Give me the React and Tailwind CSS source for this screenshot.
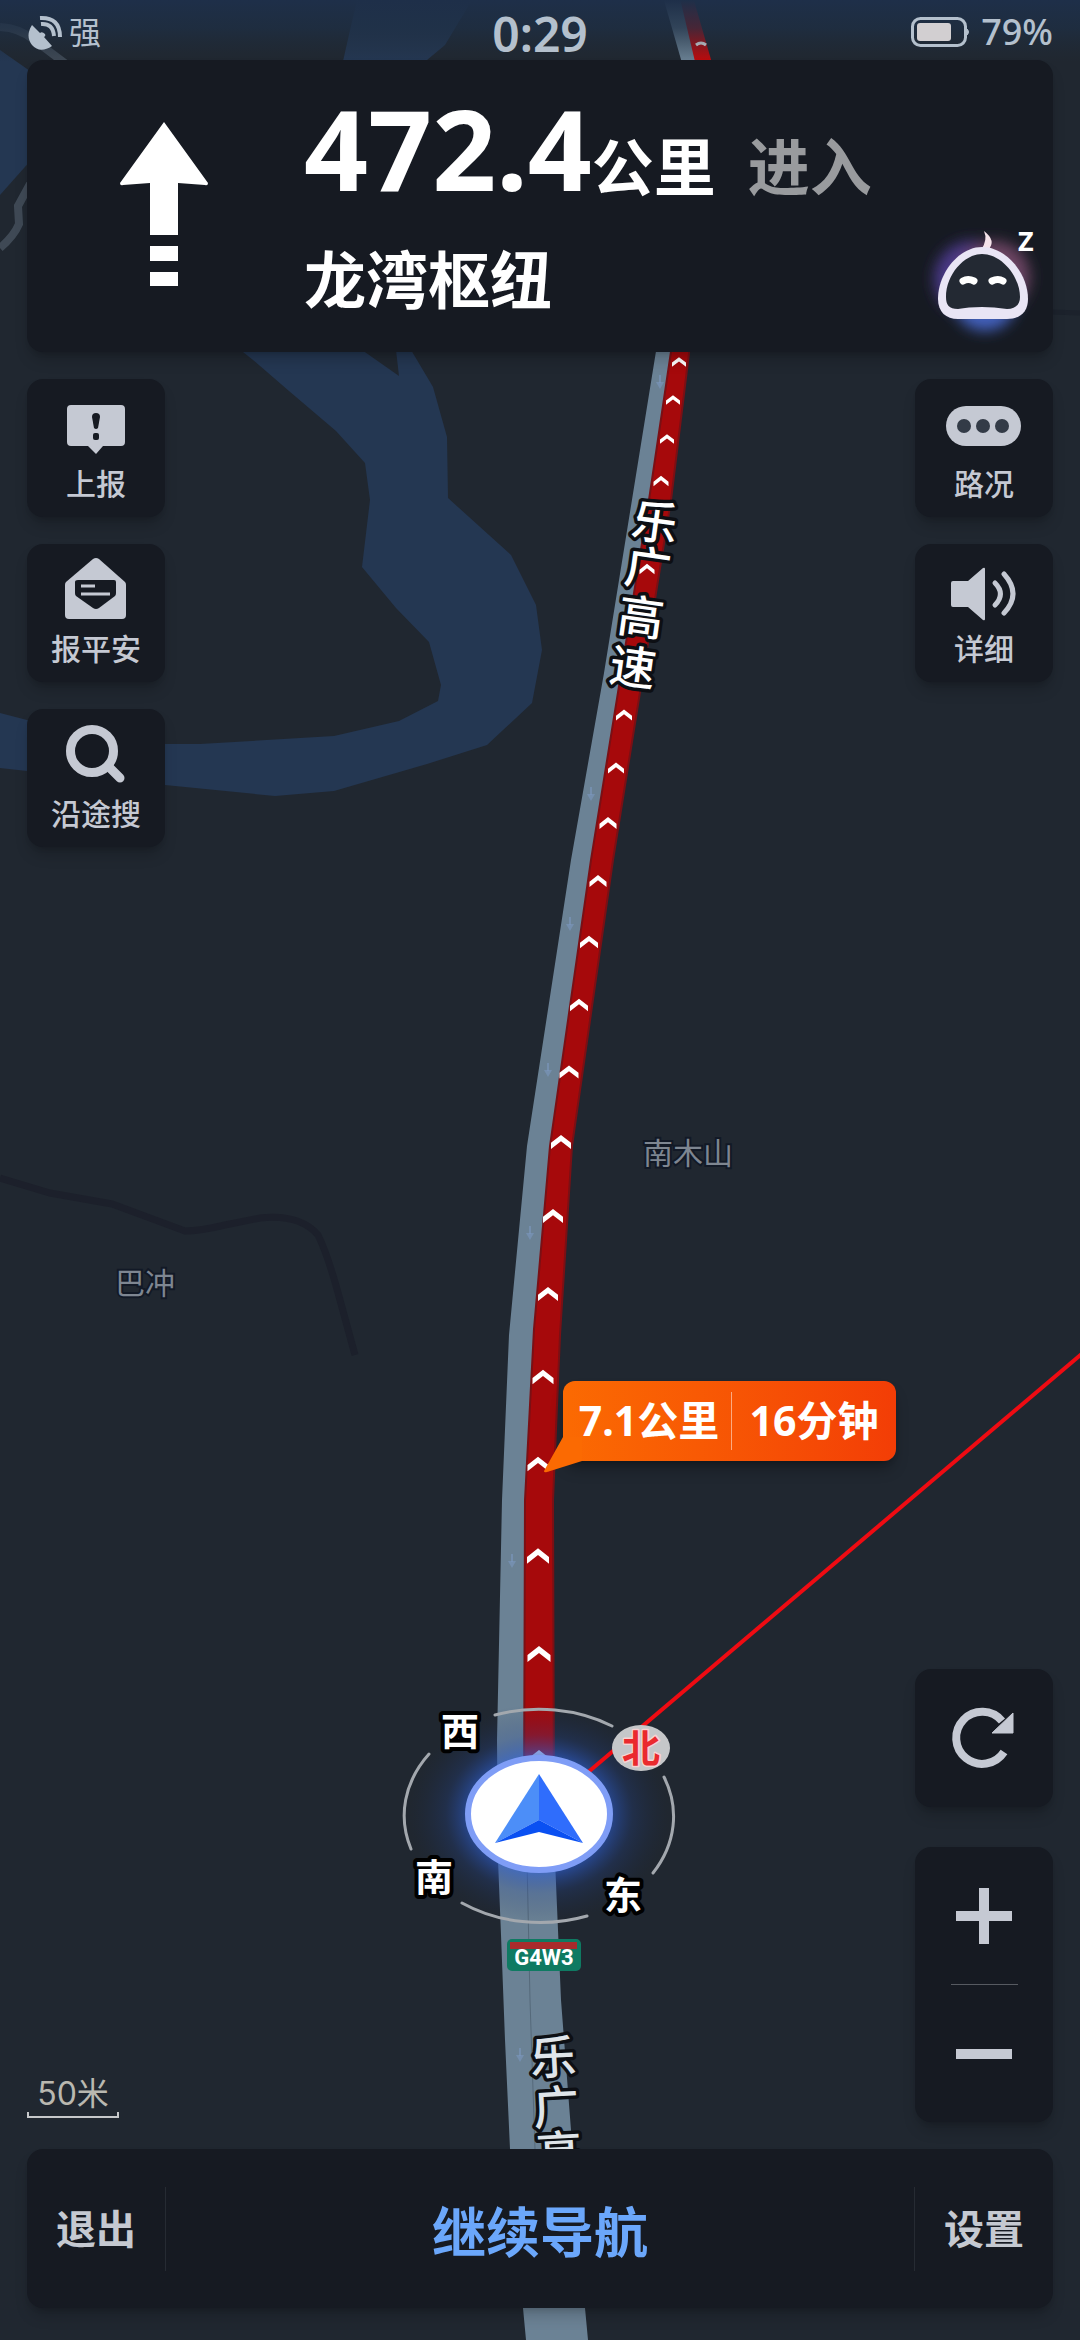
import { useState } from "react";

// route arrows: x, y, width
const chevrons = [
  [679, 362, 14],
  [673, 400, 14],
  [667, 439, 14],
  [661, 481, 15],
  [647, 569, 15],
  [624, 715, 16],
  [616, 768, 16],
  [608, 823, 17],
  [598, 881, 17],
  [589, 942, 18],
  [579, 1005, 18],
  [569, 1072, 19],
  [561, 1142, 20],
  [553, 1216, 20],
  [548, 1294, 20],
  [543, 1377, 21],
  [538, 1464, 21],
  [538, 1556, 22],
  [539, 1654, 23],
  [539, 1758, 23],
];

// opposite direction arrows on the grey road
const laneArrows = [
  [660, 382],
  [591, 794],
  [570, 924],
  [548, 1070],
  [530, 1233],
  [512, 1561],
  [520, 2055],
];

const roadName = [
  ["乐", 655, 522],
  ["广", 648, 568],
  ["高", 641, 617],
  ["速", 633, 667],
];

const roadNameLow = [
  ["乐", 553, 2057],
  ["广", 556, 2107],
  ["高", 559, 2152],
];

function MapCanvas() {
  return (
    <svg
      className="absolute inset-0 h-full w-full"
      viewBox="0 0 1080 2340"
      preserveAspectRatio="xMidYMid slice"
      aria-label="地图"
    >
      <defs>
        <radialGradient id="glow">
          <stop offset="0.5" stopColor="#2f62d8" stopOpacity="0.7" />
          <stop offset="0.72" stopColor="#24479a" stopOpacity="0.25" />
          <stop offset="1" stopColor="#1b2c55" stopOpacity="0" />
        </radialGradient>
        <linearGradient id="sky" x1="0" y1="0" x2="0" y2="1">
          <stop offset="0" stopColor="#1e2f49" />
          <stop offset="0.45" stopColor="#1e2f45" stopOpacity="0.75" />
          <stop offset="1" stopColor="#202c3a" stopOpacity="0" />
        </linearGradient>
      </defs>

      <rect width="1080" height="2340" fill="#202730" />

      {/* water */}
      <g fill="#243752">
        <path d="M228 340L253 360L289 391L336 431L365 463L370 500L362 567L396 608L429 642L441 685L438 701L399 721L334 736L200 744L165 744L27 720L0 713V768L27 771L165 785L275 796L334 791L427 764L487 745L532 703L542 650L536 605L511 555L448 498L447 437L433 387L417 360L405 340Z" />
        <path d="M341 70L350 30L357 0H472L445 45L427 60L420 70Z" />
        <path d="M0 50L40 78V150L0 195Z" />
      </g>
      <path d="M362 350L399 376L396 350Z" fill="#202730" />

      {/* small roads */}
      <g fill="none" stroke="#47525f" strokeWidth="8" strokeOpacity="0.8">
        <path d="M0 27Q20 28 34 40L66 64" />
        <path d="M30 184L18 206L19 224Q14 236 0 248" />
      </g>
      <path
        d="M0 1178L50 1193L112 1204L150 1218L185 1231Q200 1231 225 1225L260 1218Q300 1214 318 1235Q328 1255 340 1300L355 1355"
        fill="none"
        stroke="#1c202b"
        strokeWidth="7"
      />
      <path d="M1052 312L1080 313" stroke="#1c222c" strokeWidth="5" />

      {/* highway */}
      <path
        d="M657 345L604 673L571 860L527 1146L509 1335L502 1500L497 1740L498 1860L501 1935L505 2040L510 2149L523 2308L526 2340H588L585 2308L571 2130L561 2000L555 1860V1790L540 1700V1500L548 1329L561 1146L600 860L660 500L680 345Z"
        fill="#6b8295"
      />
      <path d="M527 1860L530 2000L535 2149" fill="none" stroke="#55697a" strokeWidth="1" />
      <path d="M661 -10L684 70H702L678 -10Z" fill="#6b8295" />
      <path d="M678 -10L697 70H714L691 -10Z" fill="#c00a0c" />
      <path
        d="M672 345L649 500L591 860L550 1146L534 1329L525 1500L524 1810H554L553 1500L560 1335L572 1146L613 860L671 500L690 345Z"
        fill="#a6090b"
        stroke="#7a1015"
        strokeWidth="2"
      />

      {laneArrows.map(([x, y]) => (
        <g key={y} transform={`translate(${x} ${y})`} fill="#7b97bf" fillOpacity="0.6">
          <rect x="-1" y="-7" width="2" height="8" />
          <path d="M-4 0H4L0 7Z" />
        </g>
      ))}

      {chevrons.map(([x, y, w]) => (
        <path
          key={y}
          transform={`translate(${x} ${y}) scale(${w / 23})`}
          d="M-11.500 1L0 -8L11.500 1V8L0 -1L-11.500 8Z"
          fill="#fff"
        />
      ))}
      <path d="M696 45Q701 41 706 45" fill="none" stroke="#fff" strokeWidth="3" />

      {/* status bar haze */}
      <rect width="1080" height="62" fill="url(#sky)" />

      <g fontSize="30" fill="#7e8691" stroke="#121926" strokeWidth="4" paintOrder="stroke" textAnchor="middle">
        <text x="688" y="1164">南木山</text>
        <text x="145" y="1294">巴冲</text>
      </g>

      <g fontSize="46" fontWeight="500" stroke="#0d0f14" strokeWidth="7" strokeLinejoin="round" paintOrder="stroke" textAnchor="middle">
        {roadName.map(([char, x, y]) => (
          <text key={char} transform={`translate(${x} ${y}) rotate(8)`} y="17" fill="#fff">
            {char}
          </text>
        ))}
        {roadNameLow.map(([char, x, y]) => (
          <text key={char} transform={`translate(${x} ${y}) rotate(-3)`} y="17" fill="#dfe4e9">
            {char}
          </text>
        ))}
      </g>

      {/* position puck and compass */}
      <ellipse cx="539" cy="1814" rx="130" ry="110" fill="url(#glow)" />
      <path d="M1084 1352L560 1796" stroke="#ef0b12" strokeWidth="4" />
      <g fill="none" stroke="#a3a8ae" strokeWidth="3" strokeLinecap="round">
        <path d="M495 1715A136 107 0 0 1 612 1726" />
        <path d="M664 1777A136 107 0 0 1 653 1873" />
        <path d="M587 1916A136 107 0 0 1 462 1903" />
        <path d="M411 1849A136 107 0 0 1 429 1754" />
      </g>
      <ellipse cx="539" cy="1814" rx="71" ry="56" fill="#fff" stroke="#7f9df6" strokeWidth="6" />
      <path d="M539 1774L495 1843L539 1820Z" fill="#4c8ef8" />
      <path d="M539 1774L583 1843L539 1820Z" fill="#2f6dfc" />
      <path d="M495 1843L539 1820L583 1843L539 1832Z" fill="#0a50f2" />

      <ellipse cx="641" cy="1748" rx="29" ry="23" fill="#c5c7c9" />
      <g fontSize="38" fontWeight="700" strokeWidth="8" strokeLinejoin="round" paintOrder="stroke" textAnchor="middle">
        <text x="641" y="1762" fill="#ea2a2e" stroke="#f7d3d3" strokeWidth="3">北</text>
        <text x="460" y="1745" fill="#fff" stroke="#000">西</text>
        <text x="434" y="1891" fill="#fff" stroke="#000">南</text>
        <text x="623" y="1909" fill="#fff" stroke="#000">东</text>
      </g>

      {/* road shield */}
      <rect x="507" y="1939" width="74" height="32" rx="5" fill="#0f7a62" />
      <rect x="510" y="1942" width="67" height="7" fill="#a92b2c" />
      <text x="544" y="1965" fontSize="22" fontWeight="700" fill="#fff" textAnchor="middle" fontFamily="Roboto, sans-serif">
        G4W3
      </text>
    </svg>
  );
}

function StatusBar() {
  return (
    <div className="grid h-[60px] grid-cols-3 items-center px-[27px] text-[#b4c0cd]">
      <div className="flex items-center gap-1.5">
        <svg className="h-9 w-9" viewBox="0 0 36 36" fill="none" stroke="currentColor" strokeWidth="4">
          <path
            d="M5 11L13 19Q15 17 18 20Q19 22 17 23L25 32Q13 40 5 31Q-2 22 5 11Z"
            fill="currentColor"
            stroke="none"
          />
          <path d="M14 10Q26 9 27 22" />
          <path d="M13 4Q33 3 33 23" />
        </svg>
        <span className="text-[32px] leading-9">强</span>
      </div>
      <time className="pt-1 text-center text-[48px] font-semibold leading-[60px]">0:29</time>
      <div className="flex items-center justify-end gap-2.5">
        <svg className="h-[30px] w-[60px]" viewBox="0 0 60 30">
          <rect x="1.500" y="1.500" width="53" height="27" rx="8" fill="none" stroke="currentColor" strokeWidth="3" />
          <rect x="6" y="6" width="34" height="18" rx="3" fill="#d2cfd1" />
          <path d="M55 11Q60 15 55 19Z" fill="currentColor" stroke="currentColor" />
        </svg>
        <span className="text-[36px] font-medium leading-[60px]">79%</span>
      </div>
    </div>
  );
}

function Assistant() {
  return (
    <svg className="h-[130px] w-[130px]" viewBox="0 0 130 130">
      <defs>
        <filter id="soft" x="-50%" y="-50%" width="200%" height="200%">
          <feGaussianBlur stdDeviation="7" />
        </filter>
      </defs>
      <g filter="url(#soft)">
        <circle cx="54" cy="64" r="38" fill="#4a3786" />
        <circle cx="76" cy="62" r="36" fill="#6d4564" />
        <circle cx="67" cy="84" r="32" fill="#4260bc" />
      </g>
      <path d="M66 16Q70 25 63 35H70Q79 26 66 16Z" fill="#f6e3ea" />
      <path
        d="M64 32C88 32 110 58 110 84C110 98 101 104 89 104H40C28 104 20 97 20 84C20 58 41 32 64 32Z"
        fill="#e9e5f5"
      />
      <path
        d="M64 39C84 39 102 62 102 82C102 90 97 94 89 94Q76 92 64 92Q50 92 40 94C31 94 28 90 28 82C28 60 46 39 64 39Z"
        fill="#232933"
      />
      <g fill="none" stroke="#fff" strokeWidth="7" strokeLinecap="round">
        <path d="M45 66Q50 63 56 66" />
        <path d="M74 66Q80 63 85 66" />
      </g>
      <text x="100" y="36" fontSize="27" fontWeight="700" fill="#fff">
        Z
      </text>
    </svg>
  );
}

function TurnCard() {
  return (
    <header className="mx-[27px] flex rounded-2xl bg-[#161a22] pl-[93px] shadow-lg shadow-black/20">
      <svg className="mt-[62px] h-[165px] w-[88px] shrink-0" viewBox="0 0 88 165" fill="#fff">
        <path d="M44 0L88 61Q88 64 85 63L58 61V113H30V61L3 63Q0 64 0 61Z" />
        <rect x="30" y="124" width="28" height="15" />
        <rect x="30" y="150" width="28" height="14" />
      </svg>
      <div className="ml-24 pt-7 pb-9 font-bold whitespace-nowrap text-white">
        <p className="flex items-baseline text-[112px] leading-[120px]">
          472.4
          <span className="text-[62px] leading-none">公里</span>
          <span className="ml-8 text-[62px] leading-none text-[#999b9e]">进入</span>
        </p>
        <h1 className="mt-9 text-[62px] leading-[72px]">龙湾枢纽</h1>
      </div>
      <div className="mr-[5px] mb-[7px] ml-auto self-end">
        <Assistant />
      </div>
    </header>
  );
}

function MapButton({ label, children }) {
  return (
    <button className="flex h-[138px] w-[138px] flex-col items-center rounded-2xl bg-[#161a22] pt-2 text-[#c5c9d3] shadow-lg shadow-black/20">
      <svg className="h-20 w-20" viewBox="0 0 80 80" fill="currentColor">
        {children}
      </svg>
      <span className="text-[30px] font-medium leading-[34px]">{label}</span>
    </button>
  );
}

function LeftTools() {
  return (
    <div className="flex flex-col gap-[27px]">
      <MapButton label="上报">
        <path d="M15 18H65Q69 18 69 22V55Q69 59 65 59H47L40 67L32 59H15Q11 59 11 55V22Q11 18 15 18Z" />
        <path d="M36 30Q36 26 40 26Q44 26 44 30L42 41Q40 43 38 41Z" fill="#161a22" />
        <rect x="37" y="46" width="6" height="7" rx="2" fill="#161a22" />
      </MapButton>

      <MapButton label="报平安">
        <path d="M37 7Q40 5 43 7L69 30Q70 31 70 33V63Q70 67 66 67H13Q9 67 9 63V33Q9 31 10 30Z" />
        <path d="M22 28H58Q60 28 60 30V41Q60 43 59 44L43 56Q40 58 37 56L20 44Q19 43 19 41V30Q19 28 22 28Z" fill="#161a22" />
        <path d="M25 34H39M25 42H54" stroke="currentColor" strokeWidth="3" />
      </MapButton>

      <MapButton label="沿途搜">
        <circle cx="36" cy="34" r="21.500" fill="none" stroke="currentColor" strokeWidth="9" />
        <path d="M52 49L64 61" stroke="currentColor" strokeWidth="9" strokeLinecap="round" />
      </MapButton>
    </div>
  );
}

function RightTools() {
  return (
    <div className="flex flex-col gap-[27px]">
      <MapButton label="路况">
        <rect x="2" y="19" width="75" height="40" rx="20" />
        <g fill="#333b47">
          <circle cx="20" cy="39" r="7" />
          <circle cx="39" cy="39" r="7" />
          <circle cx="58" cy="39" r="7" />
        </g>
      </MapButton>

      <MapButton label="详细">
        <path d="M9 29H24L39 16Q41 15 41 17V67Q41 69 39 68L24 55H9Q7 55 7 53V31Q7 29 9 29Z" />
        <g fill="none" stroke="currentColor" strokeWidth="5" strokeLinecap="round">
          <path d="M51 31Q62 42 51 53" />
          <path d="M60 22Q78 42 60 61" />
        </g>
      </MapButton>
    </div>
  );
}

function ZoomTools({ onZoom }) {
  return (
    <div className="flex w-[138px] flex-col items-center rounded-2xl bg-[#161a22] text-[#c5c9d3] shadow-lg shadow-black/20">
      <button aria-label="放大" className="flex h-[137px] w-full items-center justify-center" onClick={() => onZoom(1)}>
        <svg className="h-14 w-14" viewBox="0 0 56 56" stroke="currentColor" strokeWidth="10">
          <path d="M0 28H56M28 0V56" />
        </svg>
      </button>
      <div className="h-px w-[67px] bg-[#565a61]" />
      <button aria-label="缩小" className="flex h-[137px] w-full items-center justify-center" onClick={() => onZoom(-1)}>
        <svg className="h-14 w-14" viewBox="0 0 56 56" stroke="currentColor" strokeWidth="10">
          <path d="M0 28H56" />
        </svg>
      </button>
    </div>
  );
}

function ScaleBar() {
  return (
    <div className="w-[92px] pb-1 text-center text-[#b9b8b0]">
      <p className="font-['Inter','Noto_Sans_CJK_SC',sans-serif] text-[32px] leading-9">50米</p>
      <div className="h-1.5 border-x-2 border-b-2 border-[#c6c8ca]" />
    </div>
  );
}

function JamCallout() {
  return (
    <div className="absolute top-[1381px] left-1/2 ml-[23px] flex h-20 w-[333px] items-center rounded-xl bg-linear-to-r from-[#fb6a02] to-[#f33d06] pl-1 text-[41px] font-bold whitespace-nowrap text-white shadow-lg shadow-black/30">
      <svg className="absolute bottom-[-12px] left-[-19px] h-[36px] w-[40px]" viewBox="0 0 40 36">
        <path d="M19 0L0 34Q0 36 3 35L38 24V0Z" fill="#fb6a02" />
      </svg>
      <span className="relative flex-1 text-center">7.1公里</span>
      <i className="h-[58px] w-px bg-white/50" />
      <span className="flex-1 text-center">16分钟</span>
    </div>
  );
}

function BottomBar() {
  return (
    <footer className="mx-[27px] mb-8 flex h-[159px] items-center rounded-2xl bg-[#161a22] text-[40px] font-bold text-[#c5c9d1] shadow-lg shadow-black/20">
      <button className="h-full w-[138px]">退出</button>
      <div className="h-[84px] w-px bg-[#262b33]" />
      <button className="h-full flex-1 pt-2 text-[54px] text-[#6ba7fb]">继续导航</button>
      <div className="h-[84px] w-px bg-[#262b33]" />
      <button className="h-full w-[138px]">设置</button>
    </footer>
  );
}

function App() {
  const [, setZoom] = useState(17);

  return (
    <div className="relative flex min-h-screen flex-col overflow-hidden bg-[#202730] font-['Noto_Sans','Noto_Sans_CJK_SC',sans-serif]">
      <MapCanvas />
      <JamCallout />

      <div className="relative flex flex-1 flex-col">
        <StatusBar />
        <TurnCard />

        <main className="flex flex-1 flex-col justify-between p-[27px]">
          <div className="flex justify-between">
            <LeftTools />
            <RightTools />
          </div>

          <div className="flex items-end justify-between">
            <ScaleBar />
            <div className="flex flex-col gap-10">
              <button
                aria-label="刷新路线"
                className="flex h-[138px] w-[138px] items-center justify-center rounded-2xl bg-[#161a22] text-[#c5c9d3] shadow-lg shadow-black/20"
              >
                <svg className="h-20 w-20" viewBox="0 0 80 80">
                  <path d="M58 23A26 26 0 1 0 60 54" fill="none" stroke="currentColor" strokeWidth="8" />
                  <path d="M69 15V35H48Z" fill="currentColor" stroke="currentColor" strokeWidth="1" />
                </svg>
              </button>
              <ZoomTools onZoom={(step) => setZoom((z) => z + step)} />
            </div>
          </div>
        </main>

        <BottomBar />
      </div>
    </div>
  );
}

export default App;
